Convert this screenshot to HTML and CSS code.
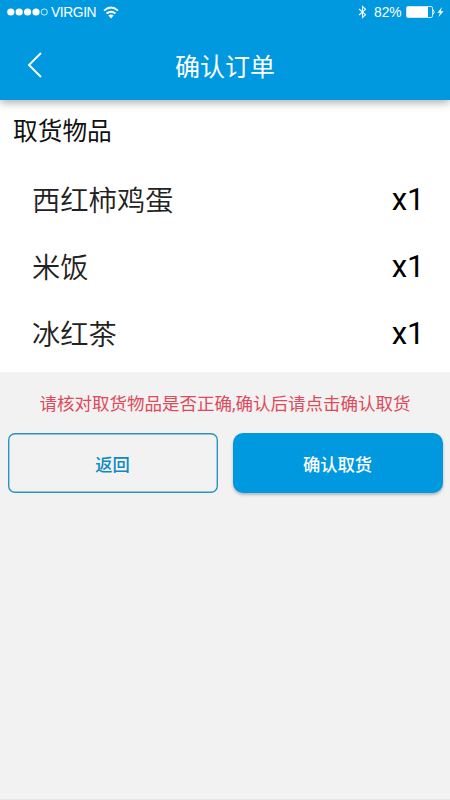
FILE: index.html
```html
<!DOCTYPE html>
<html lang="zh-CN">
<head>
<meta charset="utf-8">
<title>确认订单</title>
<link rel="stylesheet" href="styles.css">
</head>
<body>

<header class="header">
    <div class="status">
        <svg class="dots" width="42" height="10" viewBox="0 0 42 10">
            <g fill="#fff">
                <circle cx="3.8" cy="5" r="3.6"/>
                <circle cx="12.2" cy="5" r="3.6"/>
                <circle cx="20.6" cy="5" r="3.6"/>
                <circle cx="29" cy="5" r="3.6"/>
            </g>
            <circle cx="37.3" cy="5" r="3.1" fill="none" stroke="#fff" stroke-width="0.8"/>
        </svg>
        <span class="carrier">VIRGIN</span>
        <svg class="wifi" width="16" height="13" viewBox="0 0 16 13">
            <g fill="none" stroke="#fff" stroke-width="1.9">
                <path d="M1 4.6Q8-1.4 15 4.6"/>
                <path d="M3.5 7.6Q8 3.8 12.5 7.6"/>
            </g>
            <path d="M5.4 9.6Q8 7.6 10.6 9.6L8 12.4Z" fill="#fff"/>
        </svg>
        <div class="power">
            <svg width="9" height="14" viewBox="0 0 9 14">
                <path d="M1 4L7.5 9.7L4.5 12.5V1.5L7.5 4.3L1 10" fill="none" stroke="#fff" stroke-width="1.1"/>
            </svg>
            <span class="percent">82%</span>
            <svg class="battery" width="38" height="12" viewBox="0 0 38 12">
                <rect x="0.5" y="0.5" width="26" height="11" rx="1.5" fill="none" stroke="#fff" stroke-width="0.8"/>
                <rect x="1" y="1" width="21" height="10" fill="#fff"/>
                <path d="M27 3.5Q29.5 6 27 8.5" fill="none" stroke="#fff"/>
                <path d="M36 1L31.5 6.8H34L32.5 11L37.5 5.2H34.8Z" fill="#fff"/>
            </svg>
        </div>
    </div>
    <div class="navbar">
        <svg class="back" width="16" height="26" viewBox="0 0 16 26">
            <path d="M14 1L2 13L14 25" fill="none" stroke="#fff" stroke-width="1.9"/>
        </svg>
        <h1>确认订单</h1>
    </div>
</header>

<div class="goods">
    <h2>取货物品</h2>
    <ul>
        <li><span class="name">西红柿鸡蛋</span><span class="count">x1</span></li>
        <li><span class="name">米饭</span><span class="count">x1</span></li>
        <li><span class="name">冰红茶</span><span class="count">x1</span></li>
    </ul>
</div>

<p class="tip">请核对取货物品是否正确,确认后请点击确认取货</p>

<div class="buttons">
    <button class="btn">返回</button>
    <button class="btn btn-primary">确认取货</button>
</div>

</body>
</html>
```
FILE: styles.css
```css
* {
    box-sizing: border-box;
}

body {
    font-family: Roboto, "Noto Sans CJK SC", sans-serif;
    margin: 0;
    height: 800px;
    background-color: #f2f2f2;
    border-bottom: 1px solid #e6e6e6;
    overflow: hidden;
}

h1, h2, ul, p {
    margin: 0;
    padding: 0;
    font-weight: 400;
}

.header {
    position: relative;
    height: 100px;
    background-color: #0099e0;
    color: white;
    box-shadow: 0 3px 8px rgba(0, 0, 0, 0.3);
}

.status {
    display: flex;
    align-items: center;
    height: 24px;
    padding: 0 6px 0 7px;
    font-family: "Liberation Sans", sans-serif;
    font-size: 13.8px;
}

.carrier {
    width: 47px;
    margin-left: 2px;
    letter-spacing: -0.4px;
}

.wifi {
    margin-left: 5px;
}

.power {
    display: flex;
    align-items: center;
    margin-left: auto;
}

.percent {
    width: 28px;
    margin: 0 4px 0 7px;
}

.navbar {
    display: flex;
    align-items: center;
    justify-content: center;
    height: 82px;
}

.back {
    margin-left: 27px;
}

.navbar h1 {
    flex: 1;
    padding: 5px 43px 0 0;
    text-align: center;
    font-size: 25px;
    line-height: 36px;
}

.goods {
    height: 272px;
    padding-top: 14px;
    background-color: white;
}

.goods h2 {
    padding-left: 13px;
    font-size: 24.7px;
    line-height: 36px;
    color: #111;
}

.goods ul {
    margin-top: 15px;
    list-style: none;
}

.goods li {
    display: flex;
    align-items: center;
    justify-content: space-between;
    height: 67px;
    padding: 0 26px 0 32px;
}

.name {
    font-size: 28.3px;
    font-weight: 350;
    color: #222;
}

.count {
    padding-top: 2px;
    font-size: 31px;
    letter-spacing: -0.3px;
    color: #000;
}

.tip {
    height: 61px;
    padding-top: 19px;
    text-align: center;
    font-size: 17.5px;
    line-height: 26px;
    color: #dc4a5c;
}

.buttons {
    display: grid;
    grid-template-columns: 1fr 1fr;
    gap: 15px;
    padding: 0 7.5px;
}

.btn {
    height: 60px;
    padding: 0;
    border: none;
    border-radius: 7px;
    background: none;
    box-shadow: inset 0 0 0 1.4px #2b93c0;
    color: #0f8ac0;
    font-family: inherit;
    font-size: 17.3px;
    font-weight: 500;
}

.btn-primary {
    border-radius: 10px;
    background-color: #0099e0;
    color: white;
    box-shadow: 0 2px 3px rgba(0, 0, 0, 0.25);
}
```
